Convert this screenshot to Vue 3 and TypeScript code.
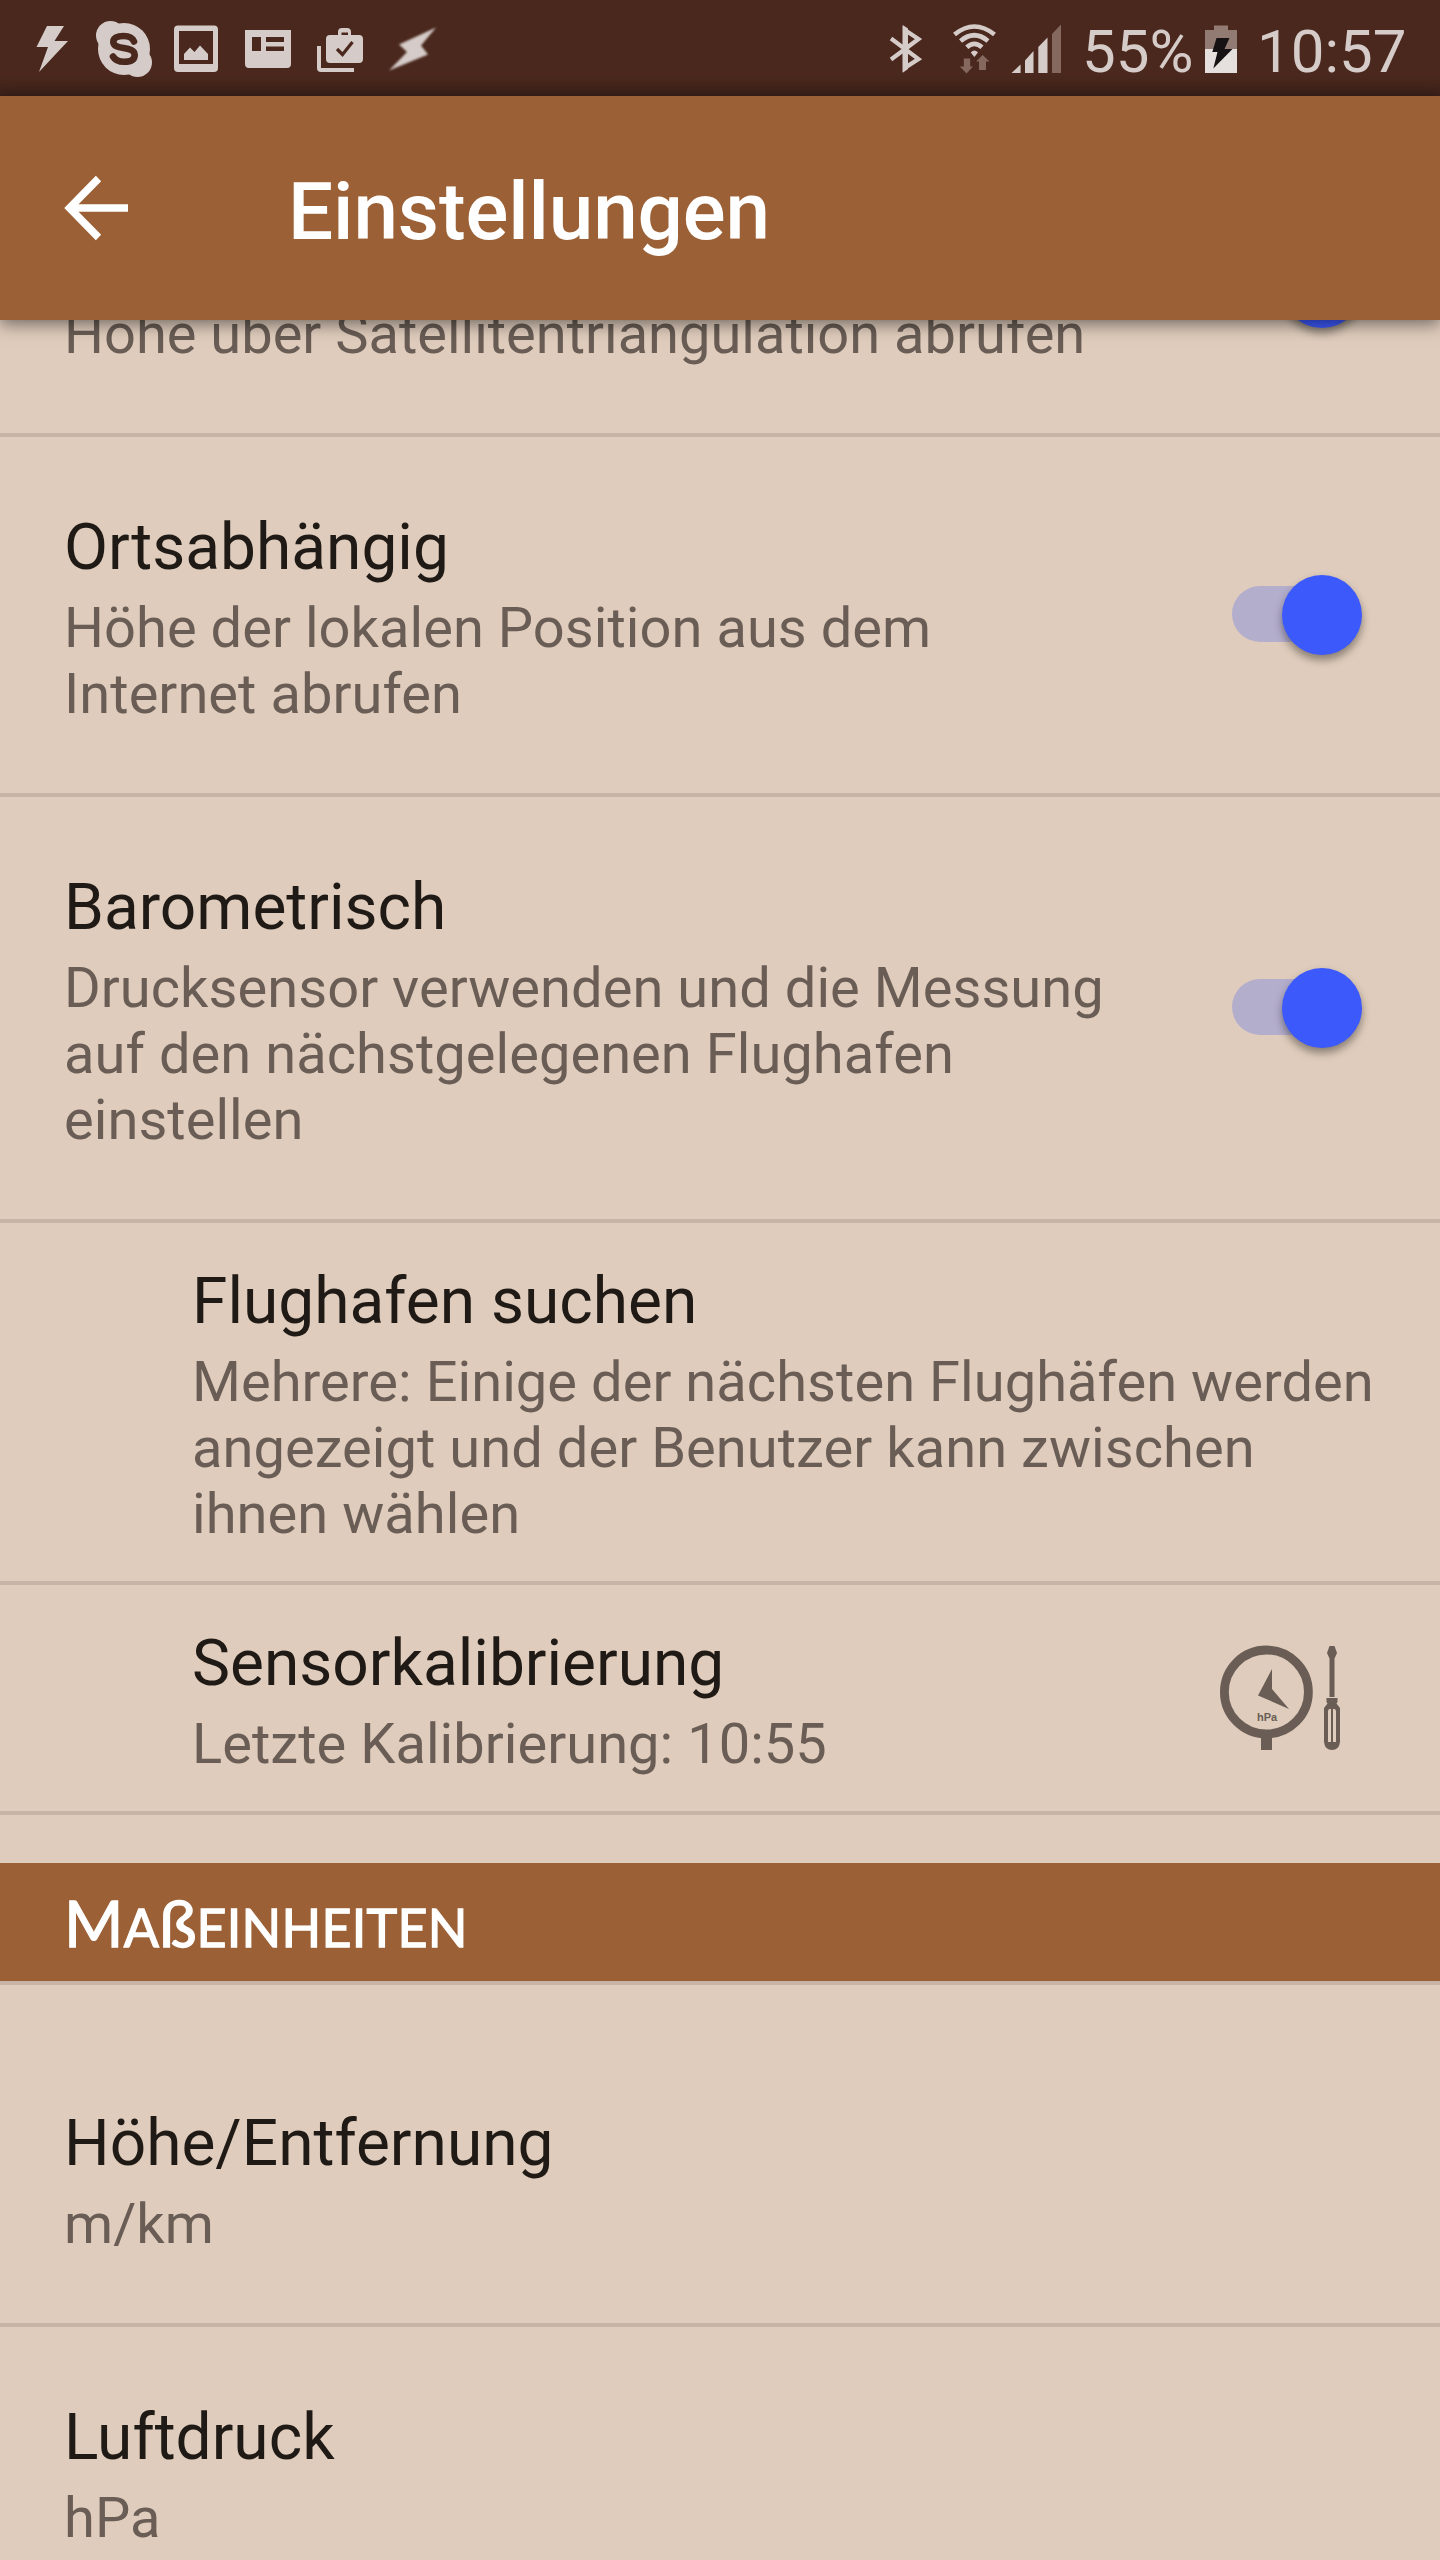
<script setup lang="ts">
interface Pref {
  title: string
  lines: string[]
  kind: 'toggle' | 'sub' | 'gauge'
}

const sensors: Pref[] = [
  { title: 'Ortsabhängig', lines: ['Höhe der lokalen Position aus dem', 'Internet abrufen'], kind: 'toggle' },
  { title: 'Barometrisch', lines: ['Drucksensor verwenden und die Messung', 'auf den nächstgelegenen Flughafen', 'einstellen'], kind: 'toggle' },
  { title: 'Flughafen suchen', lines: ['Mehrere: Einige der nächsten Flughäfen werden', 'angezeigt und der Benutzer kann zwischen', 'ihnen wählen'], kind: 'sub' },
  { title: 'Sensorkalibrierung', lines: ['Letzte Kalibrierung: 10:55'], kind: 'gauge' },
]

const units = [
  { title: 'Höhe/Entfernung', value: 'm/km', first: true },
  { title: 'Luftdruck', value: 'hPa', first: false },
]
</script>

<template>
  <div class="screen">
    <header class="status">
      <svg width="460" height="96" viewBox="0 0 460 96" fill="#d5cbc8">
        <path d="M47 26H64L54.500 41H68L39 72L48 47H36.500Z" />
        <circle cx="110.500" cy="35.500" r="14.500" />
        <circle cx="137.500" cy="62.500" r="14.500" />
        <circle cx="124" cy="49" r="26" />
        <path d="M134 41.500C132.500 37.500 128.500 36 123.500 36C117.500 36 113.300 38 113.300 42C113.300 51 134.700 45 134.700 55C134.700 60 130 61.800 124 61.800C118 61.800 115 60 113 56.500" fill="none" stroke="#4a281d" stroke-width="6.600" stroke-linecap="round" />
        <path fill-rule="evenodd" d="M178 25.500H214Q218 25.500 218 29.500V68Q218 72 214 72H178Q174 72 174 68V29.500Q174 25.500 178 25.500ZM179 31V64H213V31ZM184 60V54L190 47.500L194.500 52L200 45.500L208 54V60Z" />
        <path fill-rule="evenodd" d="M245 30H291V64Q291 68 287 68H249Q245 68 245 64ZM252 37V51H261V37ZM266 37V42H284V37ZM266 46.500V51H284V46.500Z" />
        <path fill-rule="evenodd" d="M330 35H338V32Q338 28 342 28H347Q351 28 351 32V35H359Q363 35 363 39V59Q363 63 359 63H330Q326 63 326 59V39Q326 35 330 35ZM341.500 35H348V32.500H341.500Z" />
        <path d="M337 49L342.500 54.500L352.500 42" fill="none" stroke="#4a281d" stroke-width="3.200" />
        <path d="M317 46H321V68H354V72H321Q317 72 317 68Z" />
        <path class="soft" d="M436 27.500L399 44.500L407 52L389 70.500L428 54.500L421 45.500Z" />
      </svg>
      <div class="indicators">
        <svg width="190" height="96" viewBox="880 0 190 96" fill="#d5cbc8">
          <path d="M891 38.500L918.500 59L904.800 67.800V30L918.500 39L891 59.500" fill="none" stroke="#d5cbc8" stroke-width="4.200" />
          <path d="M902.700 25L908 28.500V69L902.700 72.700Z" />
          <g fill="none" stroke="#d5cbc8" stroke-width="4.600">
            <path d="M954.500 34.500Q974.300 18.500 994.500 34.500" />
            <path d="M960.500 41Q974.300 29.500 988 41" />
            <path d="M966.800 47.300Q974.300 40.500 982 47.300" />
          </g>
          <path d="M970.800 52.500Q974.300 48.500 978 52.500L974.300 57Z" />
          <g fill="#85695f">
            <path d="M963.800 58.500H970.200V66.500H973L966.500 73.500L959.800 66.500H963.800Z" />
            <path d="M979 70V61.500H976L982.700 55L989.500 61.500H986V70Z" />
          </g>
          <path d="M1011.500 73L1020.600 64.500V73ZM1025 73V60.500L1033.500 51V73ZM1038.300 73V47L1047.500 37.500V73Z" />
          <path d="M1052 73V34L1061 24.500V73Z" fill="#85695f" />
        </svg>
        <span class="percent">55%</span>
        <svg class="battery" width="32" height="96" viewBox="1205 0 32 96">
          <path d="M1214 25.500H1228V30H1237V50H1205V30H1214Z" fill="#917b73" />
          <path d="M1205 49H1237V73H1205Z" fill="#e5dfde" />
          <path d="M1216.500 38H1229.500L1224.500 49H1232.500L1213.300 68.500L1217.500 52H1212.300Z" fill="#161214" />
        </svg>
        <span class="clock">10:57</span>
      </div>
    </header>

    <div class="appbar">
      <svg width="66" height="66" viewBox="0 0 66 66"><path d="M34.500 3.500L5.500 33L34.500 62.500M5.500 33H64" fill="none" stroke="#fff" stroke-width="7.500" /></svg>
      <h1>Einstellungen</h1>
    </div>

    <main>
      <section class="pref clipped">
        <p>Höhe über Satellitentriangulation abrufen</p>
        <span class="switch"><b></b><i></i></span>
      </section>
      <section v-for="p in sensors" :key="p.title" class="pref" :class="p.kind">
        <div>
          <h2>{{ p.title }}</h2>
          <p v-for="l in p.lines" :key="l">{{ l }}</p>
        </div>
        <span v-if="p.kind === 'toggle'" class="switch"><b></b><i></i></span>
        <svg v-if="p.kind === 'gauge'" class="tool" width="122" height="106" viewBox="0 0 122 106" fill="#695d55">
          <circle cx="46.400" cy="47" r="42" fill="none" stroke="#695d55" stroke-width="8.800" />
          <path d="M41 91H52V105H41ZM52 24V44L69 64L38 50.500Z" />
          <text x="47" y="75.500" text-anchor="middle" class="unit">hPa</text>
          <path d="M109.500 1H114.500L117 8L114.500 13.500V52H109.500V13.500L107 8Z" />
          <path fill-rule="evenodd" d="M106.500 53H117.500V57L116.500 58.500L120 63V97Q119 105 112 105Q105 105 104 97V63L107.500 58.500L106.500 57ZM108 66V97H111V64H109ZM113 64V97H116V66L115 64Z" />
        </svg>
      </section>
      <div class="category"><span class="big">M</span><span class="small">A</span><span class="big">ß</span><span class="small">EINHEITEN</span></div>
      <section v-for="u in units" :key="u.title" class="pref" :class="{ first: u.first }">
        <div>
          <h2>{{ u.title }}</h2>
          <p>{{ u.value }}</p>
        </div>
      </section>
    </main>
  </div>
</template>

<style>
body { margin: 0; background: #dfccbc; }
</style>

<style scoped>
.screen { width: 1440px; height: 2560px; overflow: hidden; display: flex; flex-direction: column; background: #dfccbc; font-family: Roboto, "Liberation Sans", sans-serif; }
h1, h2, p { margin: 0; white-space: nowrap; }
svg { flex: none; display: block; }
.status { height: 96px; flex: none; display: flex; justify-content: space-between; background: linear-gradient(#4a281d 80%, #3c2119); color: #d5cbc8; }
.soft { filter: blur(0.8px); }
.indicators { display: flex; width: 560px; font-size: 60px; line-height: 96px; }
.percent { width: 110px; margin-left: 12px; padding-top: 4px; white-space: nowrap; }
.battery { margin-left: 13px; }
.clock { margin-left: 20px; padding-top: 4px; white-space: nowrap; }
.appbar { position: relative; z-index: 1; box-sizing: border-box; height: 224px; flex: none; display: flex; align-items: center; padding-left: 64px; background: #9b6035; box-shadow: 0 4px 16px rgba(0, 0, 0, 0.5); }
.appbar h1 { margin-left: 158px; padding-top: 7px; color: #fff; font-size: 80px; line-height: 94px; font-weight: 500; letter-spacing: -0.1px; }
main { flex: 1; min-height: 0; overflow: hidden; }
.pref { box-sizing: border-box; display: flex; justify-content: space-between; align-items: center; border-bottom: 4px solid #c8b4a7; padding: 73px 78px 66px 64px; }
.clipped { height: 117px; padding: 0 78px 0 64px; align-items: flex-start; overflow: hidden; }
.clipped p { margin-top: -19px; letter-spacing: 0; }
h2 { font-size: 64px; line-height: 75px; font-weight: 400; color: #1f1a15; margin-bottom: 10px; }
p { font-size: 56px; line-height: 66px; letter-spacing: 0.05px; color: #695d55; }
.switch { height: 80px; margin-top: -7px; flex: none; display: flex; align-items: center; }
.clipped .switch { margin-top: -72px; }
.switch b { width: 90px; height: 56px; margin: 0 -40px 2px 0; border-radius: 28px; background: #b4aecd; }
.switch i { width: 80px; height: 80px; border-radius: 50%; background: #3c59fc; box-shadow: 0 5px 8px rgba(0, 0, 0, 0.4); }
.sub, .gauge { padding: 41px 0 34px 192px; }
.gauge { padding-right: 98px; }
.tool { margin: -7px 0 0; }
.unit { font: bold 11px "Liberation Sans", sans-serif; }
.category { height: 118px; margin-top: 48px; box-sizing: border-box; padding: 18px 0 0 64px; background: #9b6035; color: #fff; line-height: 84px; white-space: nowrap; font-family: Lato, sans-serif; letter-spacing: 0.25px; -webkit-text-stroke: 1.3px #fff; }
.big { font-size: 64px; }
.small { font-size: 52px; }
.first { padding-top: 121px; border-top: 4px solid #c8b4a7; }
</style>
